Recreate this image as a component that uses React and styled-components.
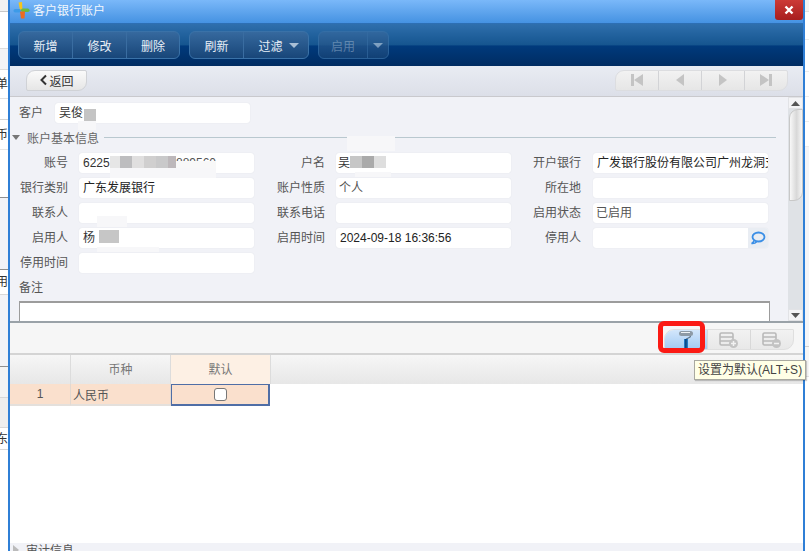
import React from "react";
import styled, { createGlobalStyle } from "styled-components";

const GlobalStyle = createGlobalStyle`
  html, body { margin: 0; padding: 0; background: #fff; overflow: hidden; }
  * { box-sizing: border-box; }
  body { font-family: "Liberation Sans", "Noto Sans CJK SC", sans-serif; font-size: 12px; color: #444; }
`;

const Page = styled.div`
  width: 809px;
  height: 551px;
  display: flex;
  overflow: hidden;
  position: relative;
`;

const Strip = styled.div`
  width: ${p => p.$w}px;
  flex: none;
  display: flex;
  flex-direction: column;
  overflow: hidden;
  background: #fff;
`;

const StripRow = styled.div`
  height: ${p => p.$h}px;
  flex: none;
  background: ${p => p.$bg || "#fff"};
  border-bottom: 1px solid ${p => p.$line || "#e4e4e4"};
  font-size: 12px;
  line-height: ${p => p.$h}px;
  white-space: nowrap;
  direction: rtl;
  color: #333;
`;

const Window = styled.div`
  width: 797px;
  flex: none;
  height: 551px;
  border-left: 2px solid #2f7fd6;
  border-right: 2px solid #2f7fd6;
  display: flex;
  flex-direction: column;
  background: #fff;
  position: relative;
`;

const TitleBar = styled.div`
  height: 23px;
  flex: none;
  background: linear-gradient(#7ab8f9, #4592e2);
  display: flex;
  align-items: center;
  padding: 0 0 4px 3px;
  gap: 2px;
  color: #f2f7fd;
  font-size: 12px;
  position: relative;
`;

const CloseButton = styled.div`
  position: absolute;
  right: 0;
  top: 0;
  width: 28px;
  height: 20px;
  border-radius: 0 0 3px 3px;
  background: linear-gradient(#cc3a36, #a81e1e);
  display: flex;
  align-items: center;
  justify-content: center;
`;

const Toolbar = styled.div`
  height: 43px;
  flex: none;
  border-top: 1px solid #2d6fb4;
  background: linear-gradient(#2f6fad 0%, #15558f 50%, #003a7c 52%, #002c62 100%);
  display: flex;
  align-items: center;
  padding-left: 8px;
  gap: 9px;
`;

const ButtonGroup = styled.div`
  display: flex;
  height: 28px;
  border-radius: 6px;
  border: 1px solid #3a72a8;
  background: linear-gradient(#36699e, #184679);
  overflow: hidden;
  opacity: ${p => (p.$off ? 0.72 : 1)};
`;

const ToolButton = styled.div`
  width: ${p => p.$w}px;
  display: flex;
  align-items: center;
  justify-content: center;
  gap: 6px;
  padding-left: ${p => p.$shift || 0}px;
  color: ${p => (p.$off ? "#7f9cbc" : "#e8eff7")};
  font-size: 12px;
  border-left: ${p => (p.$sep ? "1px solid #3a6da1" : "none")};
`;

const Caret = styled.span`
  width: 0;
  height: 0;
  border-left: 5px solid transparent;
  border-right: 5px solid transparent;
  border-top: 5px solid #a9bfd6;
  margin-top: 1px;
`;

const NavBar = styled.div`
  height: 31px;
  flex: none;
  background: linear-gradient(#e9ecf3, #dcdfe8);
  border-bottom: 1px solid #c9c9cd;
  display: flex;
  align-items: center;
  justify-content: space-between;
  padding: 0 15px 2px 16px;
`;

const BackButton = styled.div`
  width: 61px;
  height: 21px;
  border-radius: 9px 2px 9px 2px;
  background: linear-gradient(#fafafa, #e6e6e6);
  border: 1px solid #d0d2d6;
  display: flex;
  align-items: center;
  justify-content: center;
  gap: 0;
  color: #333;
  font-size: 12px;
`;

const Pager = styled.div`
  width: 173px;
  height: 21px;
  border-radius: 9px 2px 9px 2px;
  background: linear-gradient(#f2f2f2, #e6e6e6);
  border: 1px solid #dcdde0;
  display: flex;
  overflow: hidden;
`;

const PagerCell = styled.div`
  flex: 1;
  display: flex;
  align-items: center;
  justify-content: center;
  border-left: ${p => (p.$sep ? "1px solid #d2d3d6" : "none")};
`;

const FormArea = styled.div`
  height: 226px;
  flex: none;
  background: #f1f2f7;
  display: flex;
  overflow: hidden;
  border-bottom: 2px solid #9aa2a8;
`;

const FormBody = styled.div`
  width: 778px;
  flex: none;
  padding-top: 6px;
  overflow: hidden;
`;

const CustomerRow = styled.div`
  display: flex;
  align-items: center;
  height: 20px;
  padding-left: 9px;
  gap: 12px;
`;

const Legend = styled.div`
  display: flex;
  align-items: center;
  height: 16px;
  margin-top: 6px;
  padding-left: 2px;
  color: #666;
`;

const LegendArrow = styled.span`
  width: 0;
  height: 0;
  border-left: 4px solid transparent;
  border-right: 4px solid transparent;
  border-top: 5px solid #777;
  margin-right: 7px;
`;

const LegendLine = styled.span`
  width: 672px;
  height: 1px;
  background: #b9c8cf;
  margin-left: 5px;
`;

const FieldGrid = styled.div`
  display: grid;
  grid-template-columns: 58px 186px 71px 186px 70px 187px;
  grid-auto-rows: 20px;
  row-gap: 5px;
  margin-top: 8px;
`;

const Label = styled.label`
  color: #555;
  font-size: 12px;
  text-align: right;
  line-height: 20px;
  white-space: nowrap;
`;

const Field = styled.div`
  width: ${p => p.$w || 175}px;
  height: 20px;
  justify-self: end;
  background: #fff;
  border-radius: 3px;
  box-shadow: 0 0 1px #d5d8de;
  color: ${p => p.$color || "#333"};
  font-size: 12px;
  line-height: 20px;
  padding-left: ${p => p.$inset ?? 4}px;
  white-space: nowrap;
  overflow: hidden;
  position: relative;
  display: flex;
`;

const FieldText = styled.span`
  flex: 1;
  overflow: hidden;
`;

const PickButton = styled.span`
  width: 20px;
  height: 20px;
  flex: none;
  background: #e9edf3;
  display: flex;
  align-items: center;
  justify-content: center;
`;

const Mosaic = styled.span`
  position: absolute;
  left: ${p => p.$x}px;
  top: ${p => p.$y}px;
  width: ${p => p.$w}px;
  height: ${p => p.$h}px;
  background: ${p => p.$c};
`;

const HiddenDigits = styled.span`
  position: absolute;
  left: 97px;
  top: 0;
  height: 8px;
  overflow: hidden;
  line-height: 20px;
  color: #555;
`;

const Smudge = styled.div`
  position: absolute;
  left: ${p => p.$x}px;
  top: ${p => p.$y}px;
  width: ${p => p.$w}px;
  height: ${p => p.$h}px;
  background: #f7f7f9;
`;

const NoteLabel = styled.div`
  margin: 7px 0 0 9px;
  height: 16px;
  line-height: 16px;
  color: #555;
`;

const NoteBox = styled.div`
  margin: 5px 0 0 9px;
  width: 751px;
  height: 40px;
  background: #fff;
  border: 1px solid #9c9c9c;
  border-top-width: 2px;
`;

const Scrollbar = styled.div`
  width: 15px;
  flex: none;
  background: #dfe2e6;
  display: flex;
  flex-direction: column;
  align-items: center;
  position: relative;
`;

const ScrollEnd = styled.div`
  width: 15px;
  height: 12px;
  flex: none;
  background: #f4f4f6;
  border: 1px solid #e2e3e6;
  display: flex;
  align-items: center;
  justify-content: center;
`;

const ScrollThumb = styled.div`
  width: 14px;
  height: 92px;
  flex: none;
  background: linear-gradient(90deg, #f8f8f8, #d8d8d8 55%, #f6f6f6);
  border: 1px solid #c8c8c8;
  border-radius: 9px 0 9px 0;
`;

const ScrollGap = styled.div`
  flex: 1;
`;

const SubToolbar = styled.div`
  height: 32px;
  flex: none;
  background: #f6f6f6;
  border-bottom: 2px solid #d4d4d4;
  display: flex;
  align-items: center;
  justify-content: flex-end;
  padding: 3px 9px 0 0;
  position: relative;
`;

const IconGroup = styled.div`
  display: flex;
  height: 21px;
  width: 130px;
  border-radius: 10px 1px 10px 1px;
  border: 1px solid #dfdfdf;
  background: linear-gradient(#f2f2f2, #e8e8e8);
  overflow: hidden;
`;

const IconCell = styled.div`
  flex: 1;
  display: flex;
  align-items: center;
  justify-content: center;
  border-left: ${p => (p.$sep ? "1px solid #d8d8d8" : "none")};
  background: ${p => (p.$active ? "linear-gradient(#d3e6fb, #a2cbf3)" : "none")};
`;

const Highlight = styled.div`
  position: absolute;
  left: 648px;
  top: -2px;
  width: 47px;
  height: 32px;
  border: 5px solid #fb1a14;
  border-radius: 6px;
`;

const Tooltip = styled.div`
  position: absolute;
  left: 684px;
  top: 360px;
  width: 112px;
  height: 20px;
  background: #ffffe6;
  border: 1px solid #a9a9a0;
  box-shadow: 1px 1px 1px rgba(0, 0, 0, 0.2);
  color: #444;
  font-size: 12px;
  line-height: 18px;
  padding-left: 3px;
  white-space: nowrap;
  z-index: 5;
`;

const GridArea = styled.div`
  flex: 1;
  background: #fff;
  display: flex;
  flex-direction: column;
`;

const GridRow = styled.div`
  display: flex;
  height: ${p => p.$h}px;
  flex: none;
`;

const HeadCell = styled.div`
  width: ${p => p.$w}px;
  flex: ${p => (p.$grow ? 1 : "none")};
  background: ${p => (p.$current ? "#fdf0e4" : "linear-gradient(#f6f6f6, #e7e7e7)")};
  border-right: ${p => (p.$grow ? "none" : "1px solid #dcdcdc")};
  color: #777;
  font-size: 12px;
  display: flex;
  align-items: center;
  justify-content: center;
  padding-bottom: 2px;
`;

const BodyCell = styled.div`
  width: ${p => p.$w}px;
  flex: none;
  background: #fae0cd;
  border-right: 1px solid #e2d8d0;
  border-bottom: 2px solid #e4e0dc;
  color: #555;
  font-size: 12px;
  display: flex;
  align-items: center;
  justify-content: ${p => (p.$left ? "flex-start" : "center")};
  padding-left: ${p => (p.$left ? 2 : 0)}px;
`;

const SelectedCell = styled.div`
  width: 99px;
  flex: none;
  background: #fae0cd;
  border: 1px solid #4f6ea6;
  border-width: 1px 2px 2px 1px;
  display: flex;
  align-items: center;
  justify-content: center;
`;

const CheckBox = styled.span`
  width: 13px;
  height: 13px;
  background: #fff;
  border: 1px solid #777;
  border-radius: 3px;
`;

const Footer = styled.div`
  height: 8px;
  flex: none;
  background: #f1f2f7;
  display: flex;
  align-items: flex-start;
  padding-left: 3px;
  gap: 7px;
  overflow: hidden;
  color: #555;
  font-size: 12px;
  line-height: 16px;
`;

const FooterArrow = styled.span`
  width: 0;
  height: 0;
  border-top: 5px solid transparent;
  border-bottom: 5px solid transparent;
  border-left: 6px solid #bbb;
  margin-top: 2px;
`;

const Logo = () => (
  <svg width="18" height="18" viewBox="0 0 18 18">
    <path d="M5.500 1.500L9 1l.5 7.500-2.500.500z" fill="#f4c51c" />
    <rect x="0.500" y="8" width="7.500" height="3.500" rx="1.700" fill="#3d9be8" />
    <rect x="8" y="7.500" width="8.500" height="3.500" rx="1.700" fill="#6cbb3c" />
    <path d="M7 10.500h5l-.5 7H8z" fill="#ee6a1f" />
  </svg>
);

const First = () => (
  <svg width="14" height="14" viewBox="0 0 14 14">
    <rect x="1" y="1" width="3" height="12" fill="#c4c4c4" />
    <path d="M13 1v12L4 7z" fill="#c4c4c4" />
  </svg>
);
const Prev = () => (
  <svg width="10" height="14" viewBox="0 0 10 14">
    <path d="M9 1v12L1 7z" fill="#c4c4c4" />
  </svg>
);
const Next = () => (
  <svg width="10" height="14" viewBox="0 0 10 14">
    <path d="M1 1v12l8-6z" fill="#c4c4c4" />
  </svg>
);
const Last = () => (
  <svg width="14" height="14" viewBox="0 0 14 14">
    <path d="M1 1v12l9-6z" fill="#c4c4c4" />
    <rect x="10" y="1" width="3" height="12" fill="#c4c4c4" />
  </svg>
);

const Roller = () => (
  <svg width="20" height="19" viewBox="0 0 20 19">
    <rect x="3" y="1" width="14" height="5" rx="2.500" fill="#8d9aa6" />
    <path d="M5 2.500h9" stroke="#eef2f5" strokeWidth="1.200" />
    <path d="M14.500 6c0 2.500-4.500 1.500-4.500 4" stroke="#5d7488" strokeWidth="1.300" fill="none" />
    <rect x="8" y="9" width="4" height="9" fill="#2379c4" />
    <rect x="9.200" y="9" width="1.400" height="9" fill="#0b3f78" />
  </svg>
);

const TableIcon = ({ minus }) => (
  <svg width="22" height="18" viewBox="0 0 22 18">
    <rect x="2" y="2" width="13" height="12" rx="1.500" fill="none" stroke="#b9b9b9" strokeWidth="1.600" />
    <path d="M2 6h13M2 10h13" stroke="#b9b9b9" strokeWidth="1.400" />
    <circle cx="15.500" cy="12.500" r="4.500" fill="#c3c3c3" />
    <path d="M13 12.500h5" stroke="#f2f2f2" strokeWidth="1.500" />
    {!minus && <path d="M15.500 10v5" stroke="#f2f2f2" strokeWidth="1.500" />}
  </svg>
);

const Bubble = () => (
  <svg width="16" height="14" viewBox="0 0 16 14">
    <ellipse cx="8.500" cy="6" rx="6" ry="4.500" fill="none" stroke="#3b8fe6" strokeWidth="1.800" />
    <path d="M4 9.500c-.3 1.500-1 2.500-2.500 3 2 .2 4-.3 5-1.500" fill="none" stroke="#3b8fe6" strokeWidth="1.500" />
  </svg>
);

const leftRows = [
  { h: 12, bg: "#f2f2f2", line: "#c8c8c8" },
  { h: 37, line: "#dddddd" },
  { h: 21, bg: "#f4f4f6", line: "#dddddd" },
  { h: 29, text: "单", line: "#e0e0e0" },
  { h: 21, line: "#d4d4d4" },
  { h: 30, text: "币", line: "#e6e6e6" },
  { h: 48, line: "#8f8f8f" },
  { h: 72, bg: "#f2f3f7", line: "#8f8f8f" },
  { h: 25, text: "用", line: "#d8d8d8" },
  { h: 72, bg: "#f2f3f7", line: "#8f8f8f" },
  { h: 31, bg: "#f4f4f4", line: "#d8d8d8" },
  { h: 30, bg: "#eeeeee", line: "#d8d8d8" },
  { h: 22, text: "东", line: "#d8d8d8" },
];

const rightRows = [
  { h: 12, bg: "#f4f4f4", line: "#e2e2e2" },
  { h: 28, bg: "#fff", line: "#ececec" },
  { h: 32, bg: "#fff", line: "#ececec" },
  { h: 25, bg: "#fff", line: "#ececec" },
  { h: 25, bg: "#fff", line: "#ececec" },
  { h: 25, bg: "#fff", line: "#ececec" },
  { h: 200, bg: "#f4f5f8", line: "#d0d0d0" },
  { h: 30, bg: "#f6f6f6", line: "#e0e0e0" },
];

const smudges = [
  { x: 78, y: 121, w: 18, h: 9 },
  { x: 110, y: 168, w: 106, h: 10 },
  { x: 347, y: 136, w: 48, h: 15 },
  { x: 355, y: 172, w: 36, h: 5 },
  { x: 97, y: 216, w: 30, h: 11 },
  { x: 97, y: 247, w: 62, h: 5 },
];

const Rows = ({ rows }) =>
  rows.map((r, i) => (
    <StripRow key={i} $h={r.h} $bg={r.bg} $line={r.line}>
      {r.text}
    </StripRow>
  ));

const App = () => (
  <Page>
    <GlobalStyle />
    <Strip $w={8}>
      <Rows rows={leftRows} />
    </Strip>
    <Window>
      <TitleBar>
        <Logo />
        <span>客户银行账户</span>
        <CloseButton>
          <svg width="10" height="10" viewBox="0 0 10 10">
            <path d="M1.500 1.500l7 7M8.500 1.500l-7 7" stroke="#fff" strokeWidth="2.400" />
          </svg>
        </CloseButton>
      </TitleBar>
      <Toolbar>
        <ButtonGroup>
          <ToolButton $w={53}>新增</ToolButton>
          <ToolButton $w={54} $sep>修改</ToolButton>
          <ToolButton $w={53} $sep>删除</ToolButton>
        </ButtonGroup>
        <ButtonGroup>
          <ToolButton $w={53}>刷新</ToolButton>
          <ToolButton $w={65} $sep $shift={5}>过滤<Caret /></ToolButton>
        </ButtonGroup>
        <ButtonGroup $off>
          <ToolButton $w={48} $off>启用</ToolButton>
          <ToolButton $w={21} $sep><Caret /></ToolButton>
        </ButtonGroup>
      </Toolbar>
      <NavBar>
        <BackButton>
          <svg width="10" height="12" viewBox="0 0 10 12">
            <path d="M7 1.500L2.500 6L7 10.500" fill="none" stroke="#333" strokeWidth="2" />
          </svg>
          返回
        </BackButton>
        <Pager>
          <PagerCell><First /></PagerCell>
          <PagerCell $sep><Prev /></PagerCell>
          <PagerCell $sep><Next /></PagerCell>
          <PagerCell $sep><Last /></PagerCell>
        </Pager>
      </NavBar>
      <FormArea>
        <FormBody>
          <CustomerRow>
            <Label>客户</Label>
            <Field $w={195}>
              <FieldText>吴俊</FieldText>
              <Mosaic $x={29} $y={6} $w={12} $h={12} $c="#c4c4c4" />
            </Field>
          </CustomerRow>
          <Legend>
            <LegendArrow />
            账户基本信息
            <LegendLine />
          </Legend>
          <FieldGrid>
            <Label>账号</Label>
            <Field>
              <FieldText>6225</FieldText>
              <HiddenDigits>889560</HiddenDigits>
              <Mosaic $x={31} $y={3} $w={10} $h={12} $c="#e6e6e6" />
              <Mosaic $x={41} $y={3} $w={12} $h={12} $c="#bdbdbf" />
              <Mosaic $x={53} $y={3} $w={12} $h={12} $c="#e0dfdf" />
              <Mosaic $x={65} $y={3} $w={12} $h={12} $c="#d0cfcf" />
              <Mosaic $x={77} $y={3} $w={12} $h={12} $c="#c9c9ca" />
              <Mosaic $x={89} $y={3} $w={8} $h={12} $c="#bdb8bb" />
              <Mosaic $x={97} $y={8} $w={40} $h={8} $c="#f8f8f8" />
            </Field>
            <Label>户名</Label>
            <Field $inset={2}>
              <FieldText>吴</FieldText>
              <Mosaic $x={14} $y={3} $w={12} $h={12} $c="#c6c6c6" />
              <Mosaic $x={26} $y={3} $w={12} $h={12} $c="#aaaaaa" />
              <Mosaic $x={38} $y={3} $w={12} $h={12} $c="#dedede" />
            </Field>
            <Label>开户银行</Label>
            <Field $color="#222">
              <FieldText>广发银行股份有限公司广州龙洞支行</FieldText>
            </Field>

            <Label>银行类别</Label>
            <Field $color="#222"><FieldText>广东发展银行</FieldText></Field>
            <Label>账户性质</Label>
            <Field $color="#555" $inset={3}><FieldText>个人</FieldText></Field>
            <Label>所在地</Label>
            <Field />

            <Label>联系人</Label>
            <Field />
            <Label>联系电话</Label>
            <Field />
            <Label>启用状态</Label>
            <Field $color="#555" $inset={3}><FieldText>已启用</FieldText></Field>

            <Label>启用人</Label>
            <Field>
              <FieldText>杨</FieldText>
              <Mosaic $x={20} $y={2} $w={20} $h={13} $c="#c6c6c6" />
            </Field>
            <Label>启用时间</Label>
            <Field $color="#222"><FieldText>2024-09-18 16:36:56</FieldText></Field>
            <Label>停用人</Label>
            <Field>
              <FieldText />
              <PickButton><Bubble /></PickButton>
            </Field>

            <Label>停用时间</Label>
            <Field />
          </FieldGrid>
          <NoteLabel>备注</NoteLabel>
          <NoteBox />
        </FormBody>
        <Scrollbar>
          <ScrollEnd>
            <svg width="9" height="5" viewBox="0 0 9 5"><path d="M4.500 0L9 5H0z" fill="#555" /></svg>
          </ScrollEnd>
          <ScrollThumb />
          <ScrollGap />
          <ScrollEnd>
            <svg width="9" height="5" viewBox="0 0 9 5"><path d="M0 0h9L4.500 5z" fill="#555" /></svg>
          </ScrollEnd>
        </Scrollbar>
      </FormArea>
      <SubToolbar>
        <IconGroup>
          <IconCell $active><Roller /></IconCell>
          <IconCell $sep><TableIcon /></IconCell>
          <IconCell $sep><TableIcon minus /></IconCell>
        </IconGroup>
        <Highlight />
      </SubToolbar>
      <GridArea>
        <GridRow $h={29}>
          <HeadCell $w={61} />
          <HeadCell $w={100}>币种</HeadCell>
          <HeadCell $w={100} $current>默认</HeadCell>
          <HeadCell $grow />
        </GridRow>
        <GridRow $h={22}>
          <BodyCell $w={61}>1</BodyCell>
          <BodyCell $w={100} $left>人民币</BodyCell>
          <SelectedCell><CheckBox /></SelectedCell>
        </GridRow>
      </GridArea>
      <Footer>
        <FooterArrow />
        审计信息
      </Footer>
      <Tooltip>设置为默认(ALT+S)</Tooltip>
    </Window>
    <Strip $w={4}>
      <Rows rows={rightRows} />
    </Strip>
    {smudges.map((s, i) => (
      <Smudge key={i} $x={s.x} $y={s.y} $w={s.w} $h={s.h} />
    ))}
  </Page>
);

export default App;
